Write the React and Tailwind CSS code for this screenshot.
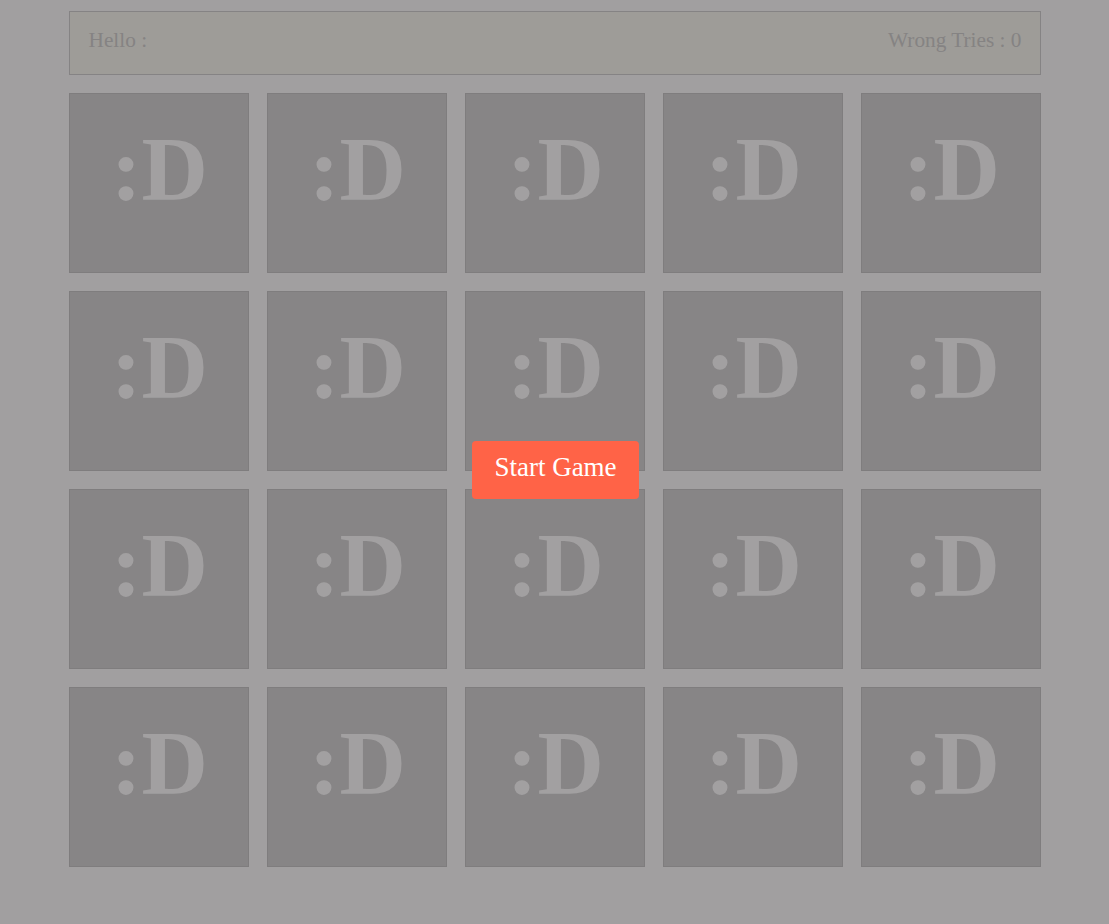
const cards = Array.from({ length: 20 }, (_, i) => i);

export default function App() {
  return (
    <div
      className="relative w-full min-h-screen bg-[#a19fa0] pt-[11px]"
      style={{ fontFamily: '"Liberation Serif", "Times New Roman", serif' }}
    >
      <div className="mx-auto w-[972px]">
        <div className="flex h-[64px] items-center justify-between border border-[#858384] bg-[#9e9c98] pl-[19px] pr-[18px] pb-[4px] text-[21.3px] text-[#858383]">
          <span>Hello :</span>
          <span>Wrong Tries : 0</span>
        </div>

        <div className="mt-[18px] grid grid-cols-5 gap-[18px]">
          {cards.map((i) => (
            <div
              key={i}
              className="h-[180px] w-[180px] border border-[#7f7d7e] bg-[#878586] pt-[29px] pl-[2px] text-center text-[92px] font-bold leading-none text-[#a2a0a1]"
            >
              :D
            </div>
          ))}
        </div>
      </div>

      <div className="absolute inset-0 flex justify-center pt-[441px] pl-[2px]">
        <button className="h-[58px] w-[167px] rounded-[4px] bg-[#ff6347] pb-[6px] text-[27px] text-white">
          Start Game
        </button>
      </div>
    </div>
  );
}
